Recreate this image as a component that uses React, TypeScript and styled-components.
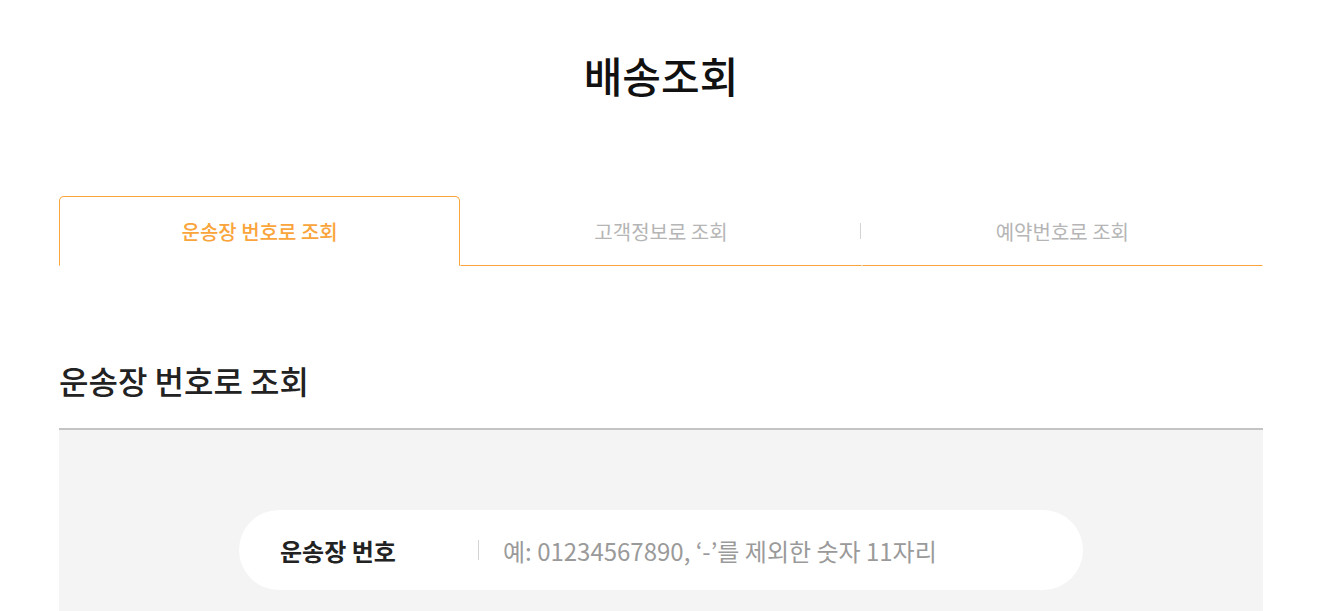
import React from "react";
import styled, { createGlobalStyle } from "styled-components";

const GlobalStyle = createGlobalStyle`
  html, body { margin: 0; padding: 0; background: #fff; }
  body { font-family: "Noto Sans CJK KR", "Noto Sans", sans-serif; color: #222; }
  * { box-sizing: border-box; }
`;

const Page = styled.div`
  width: 1204px;
  margin-left: 59px;
`;

const Title = styled.h1`
  margin: 0;
  padding-top: 46px;
  height: 196px;
  text-align: center;
  font-size: 42px;
  font-weight: 500;
  line-height: 58px;
  color: #111;
`;

const Tabs = styled.div`
  display: grid;
  grid-template-columns: repeat(3, 1fr);
  height: 70px;
`;

const Tab = styled.div<{ $active?: boolean; $divider?: boolean }>`
  position: relative;
  display: flex;
  align-items: center;
  justify-content: center;
  font-size: 20px;
  font-weight: ${(p) => (p.$active ? 500 : 400)};
  color: ${(p) => (p.$active ? "#f9a53c" : "#b5b5b5")};
  border: 1px solid ${(p) => (p.$active ? "#f9a53c" : "transparent")};
  border-bottom: 1px solid ${(p) => (p.$active ? "transparent" : "#f9a53c")};
  border-radius: ${(p) => (p.$active ? "5px 5px 0 0" : "0")};
  ${(p) =>
    p.$divider
      ? `&::after {
    content: "";
    position: absolute;
    right: 0;
    top: 26px;
    width: 1px;
    height: 16px;
    background: #d4d4d4;
  }`
      : ""}
`;

const SectionTitle = styled.h2`
  margin: 0;
  padding-top: 92px;
  padding-bottom: 25px;
  font-size: 32px;
  font-weight: 500;
  line-height: 45px;
  color: #222;
  border-bottom: 2px solid #c4c4c4;
`;

const SearchBox = styled.div`
  background: #f4f4f4;
  padding: 80px 0 40px;
  display: flex;
  justify-content: center;
`;

const Pill = styled.div`
  width: 844px;
  height: 80px;
  background: #fff;
  border-radius: 40px;
  display: flex;
  align-items: center;
  padding-left: 41px;
`;

const Label = styled.span`
  width: 198px;
  font-size: 24px;
  font-weight: 700;
  color: #222;
`;

const Sep = styled.span`
  width: 1px;
  height: 20px;
  background: #d4d4d4;
  margin-right: 24px;
`;

const Input = styled.input`
  flex: 1;
  border: none;
  outline: none;
  background: transparent;
  font-family: "Noto Sans CJK KR", "Noto Sans", sans-serif;
  font-size: 24px;
  color: #222;
  padding: 0;
  &::placeholder { color: #9a9a9a; }
`;

export default function App() {
  return (
    <>
      <GlobalStyle />
      <Page>
        <Title>배송조회</Title>
        <Tabs>
          <Tab $active>운송장 번호로 조회</Tab>
          <Tab $divider>고객정보로 조회</Tab>
          <Tab>예약번호로 조회</Tab>
        </Tabs>
        <SectionTitle>운송장 번호로 조회</SectionTitle>
        <SearchBox>
          <Pill>
            <Label>운송장 번호</Label>
            <Sep />
            <Input placeholder="예: 01234567890, ‘-’를 제외한 숫자 11자리" />
          </Pill>
        </SearchBox>
      </Page>
    </>
  );
}
